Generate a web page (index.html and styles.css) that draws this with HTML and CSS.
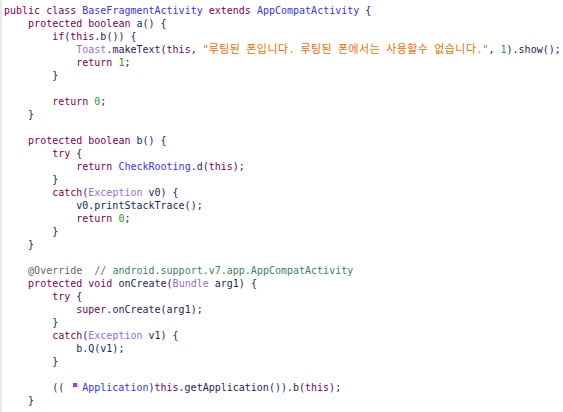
FILE: index.html
```html
<!DOCTYPE html>
<html>
<head>
<meta charset="utf-8">
<link rel="stylesheet" href="styles.css">
</head>
<body>
<div class="editor">
<div class="gutter"></div>
<pre class="code"><span class="k">public class</span> <span class="t">BaseFragmentActivity</span> <span class="k">extends</span> <span class="t">AppCompatActivity</span> {
    <span class="k">protected boolean</span> a() {
        <span class="k">if</span>(<span class="k">this</span>.b()) {
            <span class="l">Toast</span>.makeText(<span class="k">this</span>, <span class="s">"<span class="h">루팅된</span> <span class="h">폰입니다</span>. <span class="h">루팅된</span> <span class="h">폰에서는</span> <span class="h">사용할수</span> <span class="h">없습니다</span>."</span>, <span class="n">1</span>).show();
            <span class="k">return</span> <span class="n">1</span>;
        }

        <span class="k">return</span> <span class="n">0</span>;
    }

    <span class="k">protected boolean</span> b() {
        <span class="k">try</span> {
            <span class="k">return</span> <span class="t">CheckRooting</span>.d(<span class="k">this</span>);
        }
        <span class="k">catch</span>(<span class="l">Exception</span> v0) {
            v0.printStackTrace();
            <span class="k">return</span> <span class="n">0</span>;
        }
    }

    <span class="a">@Override</span>  <span class="c">// android.support.v7.app.AppCompatActivity</span>
    <span class="k">protected void</span> onCreate(<span class="l">Bundle</span> arg1) {
        <span class="k">try</span> {
            <span class="k">super</span>.onCreate(arg1);
        }
        <span class="k">catch</span>(<span class="l">Exception</span> v1) {
            b.Q(v1);
        }

        <span class="p">((</span><span class="mark"><span class="sq"></span></span><span class="t">Application</span>)<span class="k">this</span>.getApplication()).b(<span class="k">this</span>);
    }</pre>
</div>
</body>
</html>
```
FILE: styles.css
```css
html, body {
  margin: 0;
  padding: 0;
  background: #ffffff;
}
.editor {
  display: flex;
  height: 412px;
  overflow: hidden;
}
.gutter {
  width: 2px;
  flex: none;
  background: #e9e9e9;
}
.code {
  margin: 0;
  padding: 4px 0 0 2px;
  font-family: "DejaVu Sans Mono", "Noto Sans CJK KR", monospace;
  font-size: 10px;
  line-height: 13px;
  color: #1e1e5a;
  white-space: pre;
}
.k { color: #7f0055; }
.t { color: #3535ee; }
.l { color: #9a6cdc; }
.n { color: #2a9a2a; }
.s { color: #ff6a00; }
.h {
  font-family: "Noto Sans CJK KR", sans-serif;
  font-size: 11px;
  line-height: 10px;
  letter-spacing: 0.4px;
}
.a { color: #666666; }
.c { color: #3f7f5f; }
.p { color: #1e1e5a; }
.mark {
  display: inline-block;
  width: 18px;
  height: 10px;
  position: relative;
  vertical-align: middle;
}
.sq {
  position: absolute;
  left: 9px;
  top: 0;
  width: 4px;
  height: 4px;
  background: #a03ce0;
  box-shadow: 2px 0 0 #f0d8f8;
}
```
